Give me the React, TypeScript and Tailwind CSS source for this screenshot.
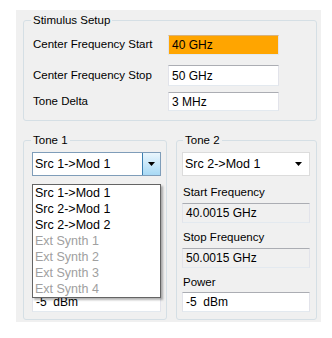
import React from 'react'

const font = "font-['Liberation_Sans',Arial,sans-serif]"
const boxBase =
  'h-[20px] flex items-center pl-[3px] text-[12px] border border-t-[#abadb3] border-x-[#e2e3ea] border-b-[#e3e9ef]'

function Caret() {
  return (
    <svg width="7" height="4" viewBox="0 0 7 4" className="block">
      <path d="M0 0H7L3.5 4Z" fill="#000" />
    </svg>
  )
}

function Group({
  label,
  legendOffset,
  className,
  children,
}: {
  label: string
  legendOffset: string
  className: string
  children: React.ReactNode
}) {
  return (
    <fieldset className={`border border-[#d5dfe5] rounded-[3px] ${className}`}>
      <legend className={`${legendOffset} px-[2px] text-[11.5px] leading-[14px] text-black`}>{label}</legend>
      {children}
    </fieldset>
  )
}

function Field({ label, value, mt, hidden }: { label: string; value: string; mt: string; hidden?: boolean }) {
  return (
    <div className={hidden ? 'invisible' : ''}>
      <div className={`${mt} pl-[1px] text-[11.5px] leading-[14px] text-black`}>{label}</div>
      <div className={`mt-[4px] ${boxBase} bg-[#f0f0f0]`}>{value}</div>
    </div>
  )
}

const toneOptions = [
  { label: 'Src 1->Mod 1', enabled: true },
  { label: 'Src 2->Mod 1', enabled: true },
  { label: 'Src 2->Mod 2', enabled: true },
  { label: 'Ext Synth 1', enabled: false },
  { label: 'Ext Synth 2', enabled: false },
  { label: 'Ext Synth 3', enabled: false },
  { label: 'Ext Synth 4', enabled: false },
]

export default function App() {
  return (
    <div className={`${font} w-[332px] h-[338px] bg-white pt-[10px] pl-[16px]`}>
      <div className="w-[305px] h-[312px] bg-[#f0f0f0] pl-[7px] pt-[3px]">
        {/* Stimulus Setup */}
        <Group label="Stimulus Setup" legendOffset="ml-[7px]" className="w-[294px] pb-[9px]">
          <div className="pl-[9px]">
            <div className="mt-[8px] flex items-center">
              <div className="w-[135px] text-[11.5px] text-black">Center Frequency Start</div>
              <div className={`w-[111px] ${boxBase} bg-[#ffa500] border-[#f3d9a4] border-t-[#d9b27a]`}>40 GHz</div>
            </div>
            <div className="mt-[10px] flex items-center">
              <div className="w-[135px] text-[11.5px] text-black">Center Frequency Stop</div>
              <div className={`w-[111px] ${boxBase} !h-[21px] bg-white`}>50 GHz</div>
            </div>
            <div className="mt-[6px] flex items-center">
              <div className="w-[135px] text-[11.5px] text-black">Tone Delta</div>
              <div className={`w-[111px] ${boxBase} !h-[19px] bg-white`}>3 MHz</div>
            </div>
          </div>
        </Group>

        <div className="mt-[12px] flex gap-[9px]">
          {/* Tone 1 */}
          <Group label="Tone 1" legendOffset="ml-[7px]" className="relative w-[144px] pb-[7px]">
            <div className="pl-[8px] w-[137px]">
              <div className="mt-[5px] h-[24px] flex border border-[#7f9db9] bg-white">
                <div className="flex-1 flex items-center pl-[2px] text-[12.5px] text-black">Src 1-&gt;Mod 1</div>
                <div className="w-[18px] flex items-center justify-center border-l border-[#3c7fb1] bg-gradient-to-b from-[#eaf6fd] to-[#a7d9f5]">
                  <Caret />
                </div>
              </div>
              {/* covered by the open list */}
              <Field label="Start Frequency" value="40.0015 GHz" mt="mt-[9px]" hidden />
              <Field label="Stop Frequency" value="50.0015 GHz" mt="mt-[7px]" hidden />
              <div className="invisible mt-[7px] pl-[1px] text-[11.5px] leading-[14px] text-black">Power</div>
              <div className={`mt-[3px] ${boxBase} bg-white`}>-5&nbsp; dBm</div>
            </div>

            {/* open dropdown list */}
            <div className="absolute left-[8px] top-[37px] w-[129px] bg-white border border-[#646464] shadow-[2px_2px_2px_rgba(0,0,0,0.3)]">
              {toneOptions.map((o) => (
                <div
                  key={o.label}
                  className={`h-[16px] leading-[16px] pl-[2px] text-[12.5px] ${o.enabled ? 'text-black' : 'text-[#a0a0a0]'}`}
                >
                  {o.label}
                </div>
              ))}
            </div>
          </Group>

          {/* Tone 2 */}
          <Group label="Tone 2" legendOffset="ml-[6px]" className="w-[141px] pb-[7px]">
            <div className="pl-[5px] w-[133px]">
              <div className="mt-[5px] h-[24px] flex items-center justify-between border border-[#dcdcdc] bg-white pl-[2px] pr-[7px]">
                <span className="text-[12.5px] text-black">Src 2-&gt;Mod 1</span>
                <Caret />
              </div>
              <Field label="Start Frequency" value="40.0015 GHz" mt="mt-[9px]" />
              <Field label="Stop Frequency" value="50.0015 GHz" mt="mt-[7px]" />
              <div className="mt-[7px] pl-[1px] text-[11.5px] leading-[14px] text-black">Power</div>
              <div className={`mt-[3px] ${boxBase} bg-white`}>-5&nbsp; dBm</div>
            </div>
          </Group>
        </div>
      </div>
    </div>
  )
}
